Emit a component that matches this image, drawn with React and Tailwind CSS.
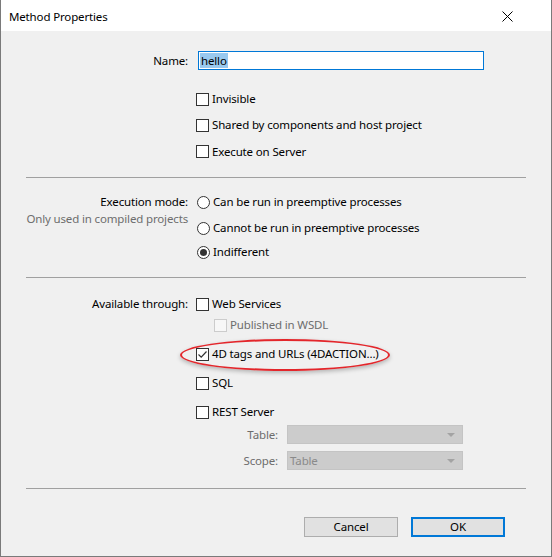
import React from 'react';

const font = { fontFamily: '"Noto Sans", "Liberation Sans", sans-serif' };

const Checkbox = ({ checked = false, disabled = false, label }) => (
  <div className="flex items-center gap-[3px]">
    <span
      className={`flex w-[13px] h-[13px] items-center justify-center border ${
        disabled ? 'border-[#cccccc] bg-[#f7f7f7]' : 'border-[#333333] bg-white'
      }`}
    >
      {checked && (
        <svg width="11" height="11" viewBox="0 0 11 11">
          <path d="M1.5 5.5 L4.2 8.2 L9.5 2.5" fill="none" stroke="#333333" strokeWidth="1.2" />
        </svg>
      )}
    </span>
    <span className={disabled ? 'text-[#6d6d6d]' : 'text-black'}>{label}</span>
  </div>
);

const Radio = ({ checked = false, label }) => (
  <div className="flex items-center gap-[3px] pl-px">
    <span className="flex w-[13px] h-[13px] items-center justify-center rounded-full border border-[#333333] bg-white">
      {checked && <span className="w-[7px] h-[7px] rounded-full bg-[#333333]" />}
    </span>
    <span className="text-black">{label}</span>
  </div>
);

const Select = ({ value }) => (
  <div className="flex h-[19px] w-[176px] items-center justify-between border border-[#c4c4c4] bg-[#cccccc] pl-[2px] pr-[7px]">
    <span className="text-[#8a8a8a]">{value}</span>
    <svg width="8" height="4" viewBox="0 0 8 4">
      <path d="M0 0 H8 L4 4 Z" fill="#a3a3a3" />
    </svg>
  </div>
);

const Separator = () => <div className="ml-[25px] mr-[25px] h-px bg-[#a0a0a0]" />;

export default function App() {
  return (
    <div
      className="flex h-[557px] w-[552px] flex-col border-x border-b border-[#7a7a7a] bg-[#f0f0f0] text-[11.5px] leading-none tracking-[-0.15px] text-black"
      style={font}
    >
      {/* Title bar */}
      <div className="flex h-[31px] items-center justify-between bg-white pl-2 pr-[38px]">
        <span className="pt-[2px]">Method Properties</span>
        <svg width="11" height="11" viewBox="0 0 11 11" className="mt-[1px]">
          <path d="M0.5 0.5 L10.5 10.5 M10.5 0.5 L0.5 10.5" stroke="#000000" strokeWidth="1" />
        </svg>
      </div>

      {/* General */}
      <div className="grid grid-cols-[187px_1fr] gap-x-[8px] pt-[20px]">
        <div className="flex h-[19px] items-center justify-end">Name:</div>
        <div className="ml-[2px] flex h-[19px] w-[286px] items-center border border-[#0078d7] bg-white pl-[1px]">
          <span className="bg-[#99c9ef] px-px pb-[2px] pt-[2px]">hello</span>
        </div>
        <div />
        <div className="flex flex-col pt-[16px]">
          <div className="flex h-[26px] items-center"><Checkbox label="Invisible" /></div>
          <div className="flex h-[26px] items-center"><Checkbox label="Shared by components and host project" /></div>
          <div className="flex h-[27px] items-center"><Checkbox label="Execute on Server" /></div>
        </div>
      </div>

      <div className="pt-[12px]"><Separator /></div>

      {/* Execution mode */}
      <div className="grid grid-cols-[187px_1fr] gap-x-[8px] pt-[12px]">
        <div className="flex flex-col items-end">
          <div className="mt-[2px] flex h-[20px] items-center">Execution mode:</div>
          <div className="flex h-[14px] items-center text-[#6d6d6d]">Only used in compiled projects</div>
        </div>
        <div className="flex flex-col">
          <div className="flex h-[24px] items-center"><Radio label="Can be run in preemptive processes" /></div>
          <div className="mt-[2px] flex h-[24px] items-center"><Radio label="Cannot be run in preemptive processes" /></div>
          <div className="flex h-[24px] items-center"><Radio checked label="Indifferent" /></div>
        </div>
      </div>

      <div className="pt-[13px]"><Separator /></div>

      {/* Availability */}
      <div className="grid grid-cols-[187px_1fr] gap-x-[8px] pt-[15px]">
        <div className="flex h-[22px] items-center justify-end">Available through:</div>
        <div className="flex flex-col">
          <div className="flex h-[22px] items-center"><Checkbox label="Web Services" /></div>
          <div className="flex h-[20px] items-center pl-[18px]"><Checkbox disabled label="Published in WSDL" /></div>
          <div className="relative mt-[8px] flex h-[22px] items-center">
            <Checkbox checked label="4D tags and URLs (4DACTION...)" />
            <div className="pointer-events-none absolute left-[-16px] top-[-4px] h-[32px] w-[210px] rounded-[50%] border-2 border-[#e3262b] shadow-[0_2px_4px_rgba(0,0,0,0.25)]" />
          </div>
          <div className="mt-[7px] flex h-[22px] items-center"><Checkbox label="SQL" /></div>
          <div className="mt-[7px] flex h-[22px] items-center"><Checkbox label="REST Server" /></div>
          <div className="mt-[2px] grid grid-cols-[82px_176px] items-center gap-x-[9px] gap-y-[7px]">
            <div className="text-right text-[#6d6d6d]">Table:</div>
            <Select value="" />
            <div className="text-right text-[#6d6d6d]">Scope:</div>
            <Select value="Table" />
          </div>
        </div>
      </div>

      <div className="pt-[18px]"><Separator /></div>

      {/* Buttons */}
      <div className="flex justify-end gap-[13px] pr-[46px] pt-[28px]">
        <button className="flex h-[20px] w-[94px] items-center justify-center border border-[#adadad] bg-[#e1e1e1] text-black">
          Cancel
        </button>
        <button className="flex h-[20px] w-[94px] items-center justify-center border-2 border-[#0078d7] bg-[#e1e1e1] text-black">
          OK
        </button>
      </div>
    </div>
  );
}
